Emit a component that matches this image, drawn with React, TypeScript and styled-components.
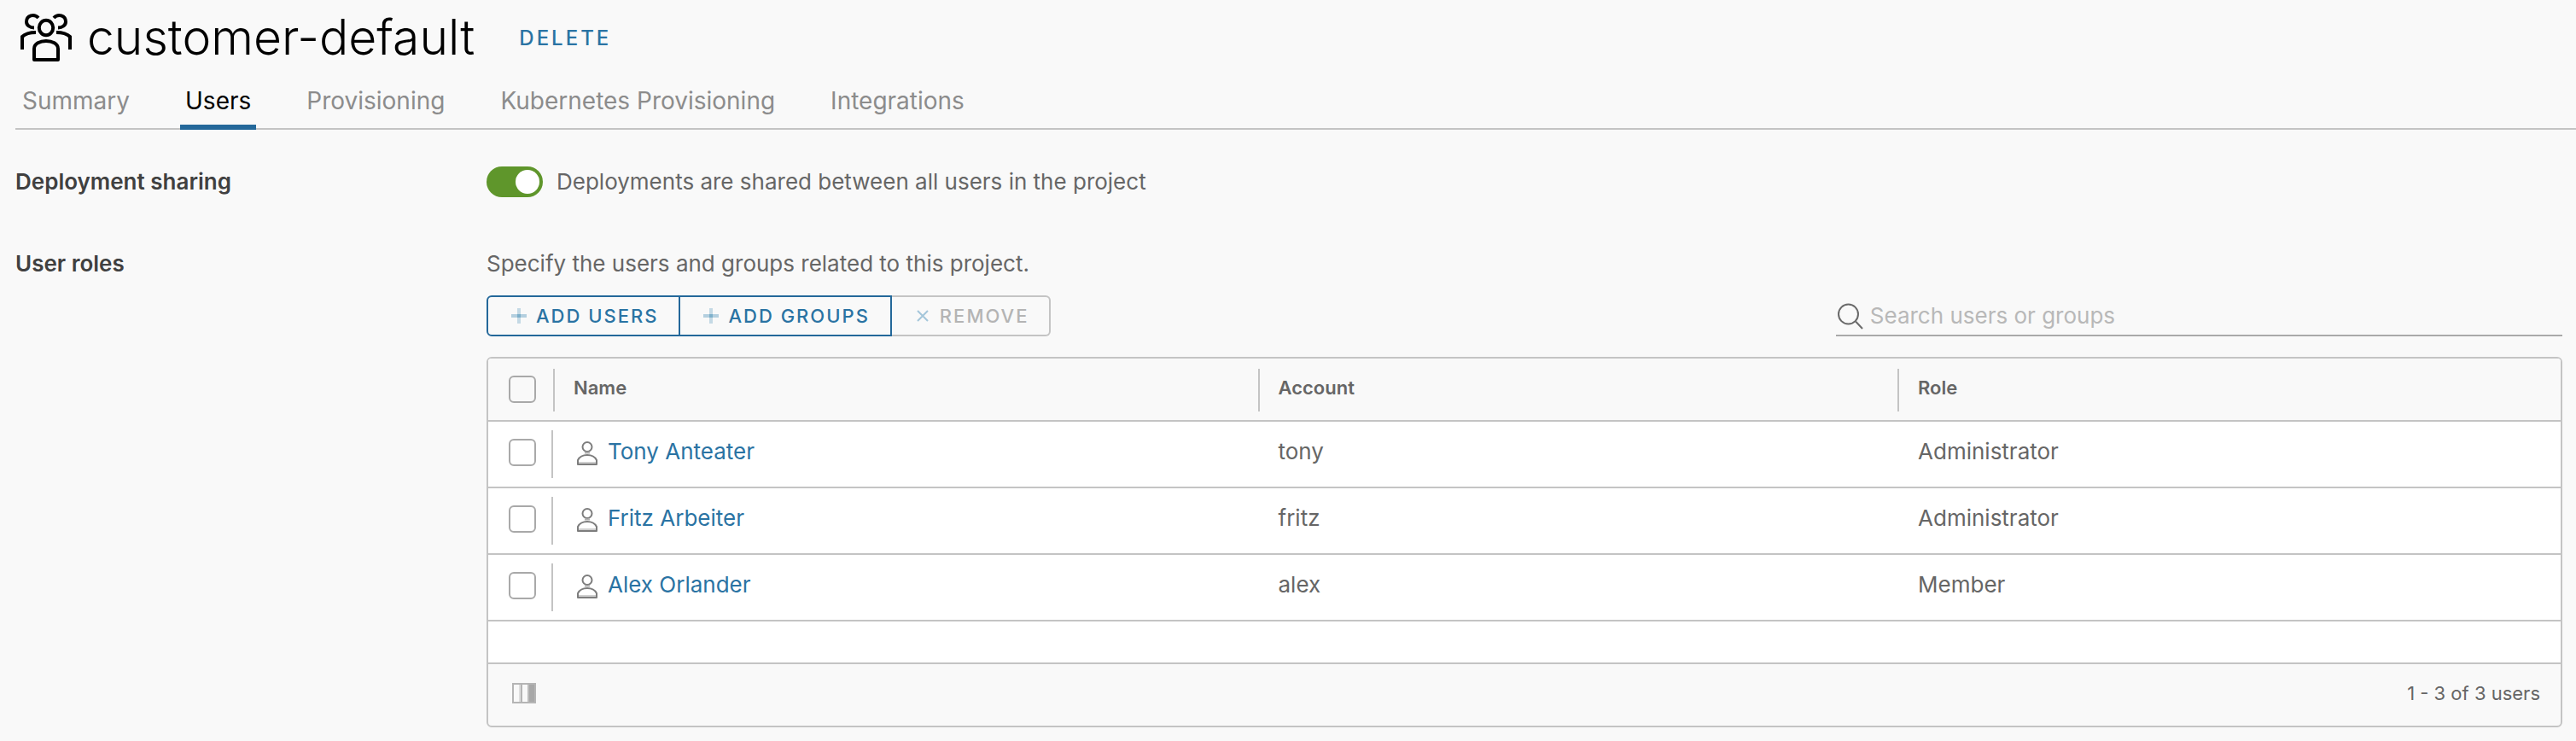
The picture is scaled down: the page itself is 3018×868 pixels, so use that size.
import React, { useState } from 'react';
import styled, { createGlobalStyle } from 'styled-components';

const color = {
  page: '#f9f9f9',
  surface: '#ffffff',
  line: '#c4c4c4',
  control: '#a9a9a9',
  blue: '#24689a',
  link: '#2a73a3',
  text: '#666666',
  strong: '#404040',
  muted: '#8c8c8c',
  disabled: '#b4b4b4',
  green: '#5f962b',
};

const GlobalStyle = createGlobalStyle`
  *, *::before, *::after { box-sizing: border-box; }
  body {
    margin: 0;
    background: ${color.page};
    color: ${color.text};
    font-family: Inter, "Open Sans", sans-serif;
    font-size: 26px;
    line-height: 36px;
  }
  button, input { font: inherit; }
`;

const Page = styled.div`
  display: flex;
  flex-direction: column;
  padding: 0 0 16px 18px;
`;

const Header = styled.header`
  display: flex;
  align-items: center;
  height: 88px;
`;

const Title = styled.h1`
  margin: 0 52px 0 12px;
  color: #000;
  font-size: 57px;
  font-weight: 300;
  line-height: 72px;
`;

const TextButton = styled.button`
  padding: 2px 0 0;
  border: 0;
  background: none;
  color: ${color.link};
  font-size: 24px;
  font-weight: 500;
  letter-spacing: 3px;
  cursor: pointer;
`;

const Tabs = styled.div`
  display: flex;
  gap: 53px;
  padding-left: 2px;
  box-shadow: inset 0 -2px ${color.line};
`;

const Tab = styled.button<{ $active: boolean }>`
  padding: 12px 6px 10px;
  border: 0;
  border-bottom: 6px solid ${({ $active }) => ($active ? color.blue : 'transparent')};
  background: none;
  color: ${({ $active }) => ($active ? '#000' : color.muted)};
  font-size: 28px;
  cursor: pointer;
`;

const Settings = styled.main`
  display: grid;
  grid-template-columns: 552px minmax(0, 1fr);
  row-gap: 58px;
  padding: 42px 16px 0 0;
`;

const SettingName = styled.h2`
  margin: 0;
  color: ${color.strong};
  font-size: 26px;
  font-weight: 600;
  line-height: 38px;
`;

const SwitchField = styled.div`
  display: flex;
  align-items: center;
  gap: 16px;
`;

const Switch = styled.input`
  display: flex;
  justify-content: flex-start;
  appearance: none;
  width: 66px;
  height: 36px;
  margin: 0;
  padding: 4px;
  border-radius: 18px;
  background: ${color.control};
  cursor: pointer;

  &::before {
    content: '';
    width: 28px;
    height: 28px;
    border-radius: 50%;
    background: ${color.surface};
  }

  &:checked {
    justify-content: flex-end;
    background: ${color.green};
  }
`;

const Intro = styled.p`
  margin: 0 0 18px;
  line-height: 38px;
`;

const Toolbar = styled.div`
  display: flex;
  justify-content: space-between;
  align-items: flex-end;
  margin-bottom: 24px;
`;

const ButtonGroup = styled.div`
  display: flex;
`;

const GroupButton = styled.button`
  display: flex;
  align-items: center;
  gap: 8px;
  height: 48px;
  padding: 0 24px;
  border: 2px solid ${color.blue};
  background: none;
  color: ${color.link};
  font-size: 22px;
  font-weight: 500;
  letter-spacing: 2px;
  cursor: pointer;

  &:first-child { border-radius: 6px 0 0 6px; }
  &:last-child { border-radius: 0 6px 6px 0; }
  & + & { border-left: 0; }

  &:disabled {
    border-color: ${color.line};
    color: ${color.disabled};
    cursor: default;
  }
`;

const Search = styled.label`
  display: flex;
  align-items: center;
  gap: 8px;
  width: 35%;
  padding-bottom: 6px;
  border-bottom: 2px solid ${color.control};
`;

const SearchInput = styled.input`
  flex: 1;
  min-width: 0;
  height: 32px;
  padding: 0;
  border: 0;
  outline: 0;
  background: none;
  color: ${color.text};

  &::placeholder { color: #b8b8b8; opacity: 1; }
`;

const Panel = styled.div`
  border: 2px solid ${color.line};
  border-radius: 6px;
  overflow: hidden;
`;

const DataTable = styled.table`
  width: 100%;
  table-layout: fixed;
  border-collapse: separate;
  border-spacing: 0;
  background: ${color.surface};
`;

const SelectColumn = styled.col`
  width: 76px;
`;

const Column = styled.col<{ $share?: string }>`
  width: ${({ $share }) => $share ?? 'auto'};
`;

const HeadCell = styled.th`
  height: 74px;
  padding: 12px 0 10px;
  border-bottom: 2px solid ${color.line};
  background: ${color.page};
  text-align: left;
  vertical-align: top;
`;

const HeadLabel = styled.div`
  height: 50px;
  padding-left: 22px;
  border-left: 2px solid ${color.line};
  font-size: 22px;
  font-weight: 600;
  line-height: 44px;
`;

const HeadSelect = styled.div`
  display: flex;
  padding: 8px 0 0 24px;
`;

const Cell = styled.td`
  height: 78px;
  padding: 17px 24px;
  border-bottom: 2px solid ${color.line};
  vertical-align: top;
`;

const SelectCell = styled(Cell)`
  padding: 10px 0;
`;

const RowSelect = styled.div`
  display: flex;
  height: 56px;
  padding: 10px 0 0 24px;
  border-right: 2px solid ${color.line};
`;

const Checkbox = styled.input`
  appearance: none;
  width: 32px;
  height: 32px;
  margin: 0;
  border: 2px solid ${color.control};
  border-radius: 6px;
  cursor: pointer;

  &:checked { background: ${color.blue}; border-color: ${color.blue}; }
`;

const UserName = styled.div`
  display: flex;
  align-items: center;
  gap: 8px;
`;

const UserLink = styled.a`
  color: ${color.link};
  text-decoration: none;
`;

const Filler = styled.div`
  height: 48px;
  background: ${color.surface};
`;

const Footer = styled.footer`
  display: flex;
  align-items: center;
  justify-content: space-between;
  padding: 12px 24px 16px;
  border-top: 2px solid ${color.line};
  font-size: 22px;
  line-height: 44px;
`;

const IconButton = styled.button`
  display: flex;
  padding: 0;
  border: 0;
  background: none;
  cursor: pointer;
`;

const GroupIcon = () => (
  <svg width="72" height="72" viewBox="18 8 72 72" fill="none" stroke="#000" strokeWidth="4" aria-hidden="true">
    <ellipse cx="54" cy="32.5" rx="8.2" ry="8.8" />
    <path d="M40 70V57c0-6 7-9 14-9s14 3 14 9v13z" strokeLinejoin="round" />
    <path d="M45 21C40 15.500 31 18 31 25.500c0 4 4 7 9 7" />
    <path d="M63 21C68 15.500 77 18 77 25.500c0 4-4 7-9 7" />
    <path d="M26 58V43c4-4 9-5 16-5" />
    <path d="M82 58V43c-4-4-9-5-16-5" />
  </svg>
);

const PlusIcon = () => (
  <svg width="24" height="24" viewBox="0 0 24 24" fill="none" aria-hidden="true">
    <path d="M3 12h18" stroke="#b4cfdf" strokeWidth="4" />
    <path d="M12 3v18" stroke="#c4d9e5" strokeWidth="4" />
    <path d="M10 12h4" stroke="#7eb0cb" strokeWidth="4" />
  </svg>
);

const CrossIcon = () => (
  <svg width="24" height="24" viewBox="0 0 24 24" fill="none" stroke="#a4c6da" strokeWidth="2" aria-hidden="true">
    <path d="M6 6l12 12M18 6L6 18" />
  </svg>
);

const SearchIcon = () => (
  <svg width="32" height="32" viewBox="0 0 32 32" fill="none" stroke="#6a6a6a" strokeWidth="2" aria-hidden="true">
    <circle cx="14.500" cy="14" r="11.500" />
    <path d="M23 22.500l8 8.500" />
  </svg>
);

const UserIcon = () => (
  <svg width="32" height="32" viewBox="0 0 32 32" fill="none" stroke="#7d7d7d" strokeWidth="2" aria-hidden="true">
    <circle cx="16" cy="10.500" r="5.500" />
    <path d="M5 31v-5c2-4 6-6 11-6s9 2 11 6v5z" strokeLinejoin="round" />
    <path d="M13 17.500h6" stroke="#b0b0b0" />
    <path d="M6 29h20" stroke="#cfcfcf" />
  </svg>
);

const ColumnsIcon = () => (
  <svg width="36" height="24" viewBox="0 0 36 24" aria-hidden="true">
    <rect x="5" y="1" width="26" height="22" fill="none" stroke="#b5b5b5" strokeWidth="2" />
    <rect x="12" y="2" width="2" height="20" fill="#dedede" />
    <rect x="14" y="2" width="2" height="20" fill="#b5b5b5" />
    <rect x="22" y="2" width="2" height="20" fill="#bdbdbd" />
    <rect x="24" y="2" width="6" height="20" fill="#a8a8a8" />
  </svg>
);

const tabs = ['Summary', 'Users', 'Provisioning', 'Kubernetes Provisioning', 'Integrations'];

const users = [
  { name: 'Tony Anteater', account: 'tony', role: 'Administrator' },
  { name: 'Fritz Arbeiter', account: 'fritz', role: 'Administrator' },
  { name: 'Alex Orlander', account: 'alex', role: 'Member' },
];

export default function App() {
  const [activeTab, setActiveTab] = useState('Users');

  return (
    <Page>
      <GlobalStyle />
      <Header>
        <GroupIcon />
        <Title>customer-default</Title>
        <TextButton type="button">DELETE</TextButton>
      </Header>

      <Tabs role="tablist">
        {tabs.map((tab) => (
          <Tab
            key={tab}
            type="button"
            role="tab"
            aria-selected={tab === activeTab}
            $active={tab === activeTab}
            onClick={() => setActiveTab(tab)}
          >
            {tab}
          </Tab>
        ))}
      </Tabs>

      <Settings>
        <SettingName>Deployment sharing</SettingName>
        <SwitchField>
          <Switch type="checkbox" role="switch" id="sharing" defaultChecked />
          <label htmlFor="sharing">Deployments are shared between all users in the project</label>
        </SwitchField>

        <SettingName>User roles</SettingName>
        <section>
          <Intro>Specify the users and groups related to this project.</Intro>

          <Toolbar>
            <ButtonGroup>
              <GroupButton type="button"><PlusIcon />ADD USERS</GroupButton>
              <GroupButton type="button"><PlusIcon />ADD GROUPS</GroupButton>
              <GroupButton type="button" disabled><CrossIcon />REMOVE</GroupButton>
            </ButtonGroup>
            <Search>
              <SearchIcon />
              <SearchInput type="text" aria-label="Search users or groups" placeholder="Search users or groups" />
            </Search>
          </Toolbar>

          <Panel>
            <DataTable>
              <colgroup>
                <SelectColumn />
                <Column $share="34%" />
                <Column />
                <Column $share="32%" />
              </colgroup>
              <thead>
                <tr>
                  <HeadCell scope="col">
                    <HeadSelect><Checkbox type="checkbox" aria-label="Select all users" /></HeadSelect>
                  </HeadCell>
                  <HeadCell scope="col"><HeadLabel>Name</HeadLabel></HeadCell>
                  <HeadCell scope="col"><HeadLabel>Account</HeadLabel></HeadCell>
                  <HeadCell scope="col"><HeadLabel>Role</HeadLabel></HeadCell>
                </tr>
              </thead>
              <tbody>
                {users.map((user) => (
                  <tr key={user.account}>
                    <SelectCell>
                      <RowSelect><Checkbox type="checkbox" aria-label={`Select ${user.name}`} /></RowSelect>
                    </SelectCell>
                    <Cell>
                      <UserName>
                        <UserIcon />
                        <UserLink href={`#${user.account}`}>{user.name}</UserLink>
                      </UserName>
                    </Cell>
                    <Cell>{user.account}</Cell>
                    <Cell>{user.role}</Cell>
                  </tr>
                ))}
              </tbody>
            </DataTable>
            <Filler />
            <Footer>
              <IconButton type="button" aria-label="Show columns"><ColumnsIcon /></IconButton>
              <span>1 - 3 of 3 users</span>
            </Footer>
          </Panel>
        </section>
      </Settings>
    </Page>
  );
}
